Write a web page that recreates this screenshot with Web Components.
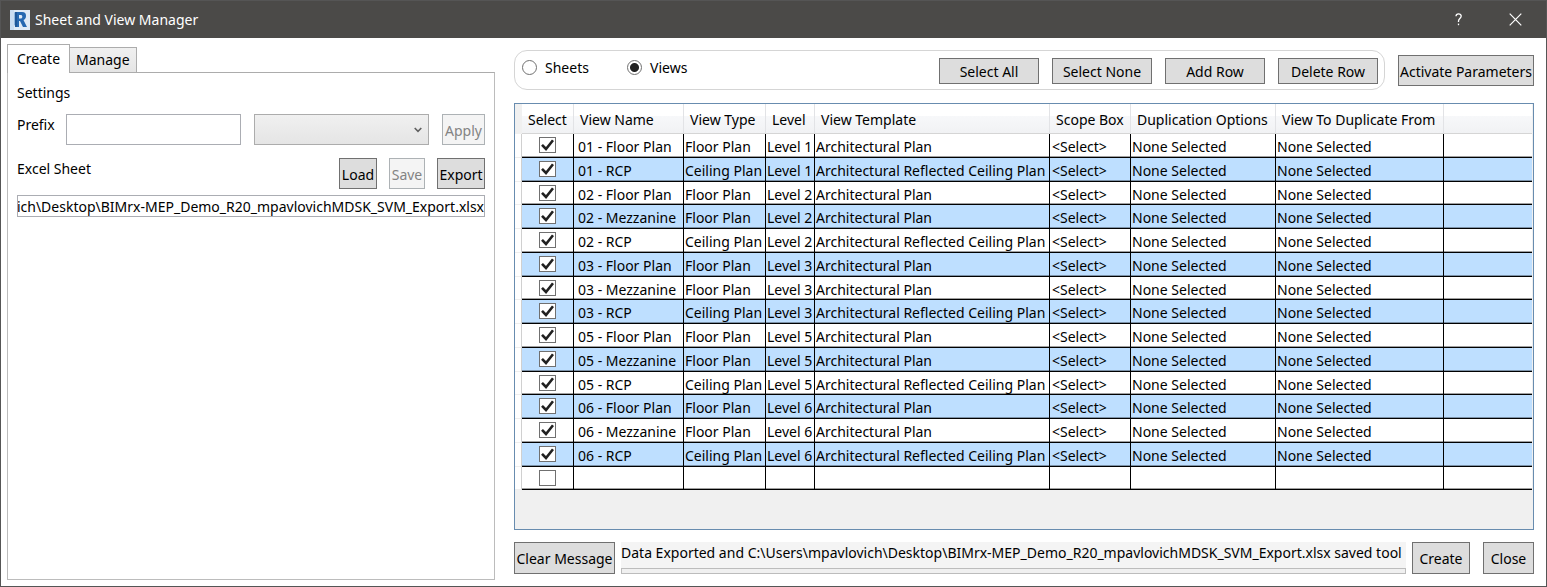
<!DOCTYPE html>
<html lang="en">
<head>
<meta charset="utf-8">
<title>Sheet and View Manager</title>
<style>
  body { margin: 0; font: 14px/20px "Noto Sans", "Open Sans", sans-serif; color: #000; background: #fff; }
</style>
</head>
<body>
<app-window heading="Sheet and View Manager">
  <tab-panel slot="side">
    <settings-form></settings-form>
  </tab-panel>
  <view-toolbar></view-toolbar>
  <view-table></view-table>
  <status-bar message="Data Exported and C:\Users\mpavlovich\Desktop\BIMrx-MEP_Demo_R20_mpavlovichMDSK_SVM_Export.xlsx saved tool"></status-bar>
</app-window>

<script>
const define = (name, html, setup) => customElements.define(name, class extends HTMLElement {
  connectedCallback() {
    if (this.shadowRoot) return;
    const root = this.attachShadow({ mode: "open" });
    root.innerHTML = "<style>*{box-sizing:border-box}:host{box-sizing:border-box}</style>" + html;
    if (setup) setup(this, root);
  }
});

/* Push button; the host carries the size, the button fills it. */
define("push-button", `
  <style>
    :host { display: block; height: 31px; }
    button { display: block; width: 100%; height: 100%; padding: 2px 0 0; margin: 0; font: inherit;
      color: #000; background: #ddd; border: 1px solid #707070; border-radius: 0; white-space: nowrap; }
    button:disabled { color: #838383; background: #f4f4f4; border-color: #adb2b5; }
  </style>
  <button type="button"><slot></slot></button>`,
  (el, root) => { root.querySelector("button").disabled = el.hasAttribute("disabled"); });

define("title-bar", `
  <style>
    :host { display: flex; align-items: center; height: 37px; padding: 0 0 0 9px; color: #fff; background: #4b4a48; }
    svg { display: block; }
    h1 { flex: 1; margin: 0 0 0 5px; font: inherit; }
    button { display: grid; place-items: center; width: 57px; height: 37px; padding: 0; border: 0;
      background: none; color: inherit; font: inherit; }
  </style>
  <svg width="20" height="20" viewBox="0 0 20 20" aria-hidden="true">
    <rect width="20" height="20" fill="#dfeaf6"/>
    <path d="M0 0h4v20H0z" fill="#c9dcf1"/>
    <path d="M4 2l3 2v13l-3-2z" fill="#8fb6de"/>
    <path fill-rule="evenodd" d="M5 2h7c3 0 4 1.500 4 4 0 2-1 3.500-2.500 4L17 17h-4l-3-6H9v6H5zM9 5v3.500h1.500c1.300 0 1.800-.6 1.800-1.800S11.800 5 10.500 5z" fill="#2668b1"/>
    <path d="M5 2h2v15H5z" fill="#1f5697"/>
  </svg>
  <h1><slot></slot></h1>
  <button type="button" aria-label="Help">
    <svg width="8" height="13" viewBox="0 0 8 13" fill="none" stroke="#fff" stroke-width="1.300">
      <path d="M1 3.200C1 1.500 2.200.8 3.600.8 5.200.8 6.200 1.700 6.200 3c0 2.400-2.700 2.600-2.700 5v1"/>
      <path d="M3.500 10.600v1.600"/>
    </svg>
  </button>
  <button type="button" aria-label="Close">
    <svg width="13" height="13" viewBox="0 0 13 13" fill="none" stroke="#fff" stroke-width="1.200">
      <path d="M.7.7l11.600 11.600M12.300.7L.7 12.300"/>
    </svg>
  </button>`);

define("app-window", `
  <style>
    :host { display: flex; flex-direction: column; min-height: 100vh; border: 1px solid #555; background: #fff; }
    title-bar { padding-right: 2px; }
    main { flex: 1; display: grid; grid-template-columns: minmax(0, 488fr) minmax(0, 1020fr); gap: 19px;
      padding: 6px 12px 6px 6px; }
    .content { display: flex; flex-direction: column; gap: 12px; padding: 6px 0; }
    ::slotted(view-table) { flex: 1; }
  </style>
  <title-bar></title-bar>
  <main>
    <slot name="side"></slot>
    <div class="content"><slot></slot></div>
  </main>`,
  (el, root) => { root.querySelector("title-bar").textContent = el.getAttribute("heading"); });

define("tab-panel", `
  <style>
    :host { display: flex; flex-direction: column; }
    .tabs { display: flex; align-items: flex-end; height: 28px; }
    button { height: 25px; padding: 0 6px; font: inherit; color: #000; border: 1px solid #acacac; border-left: 0;
      border-bottom: 0; background: linear-gradient(#f0f0f0, #e5e5e5); }
    button[aria-selected=true] { height: 29px; margin-bottom: -1px; padding: 0 9px; border-left: 1px solid #acacac;
      background: #fff; z-index: 1; }
    .body { flex: 1; padding: 10px 9px; border: 1px solid #bcbcbc; border-top-color: #acacac; }
  </style>
  <div class="tabs" role="tablist">
    <button type="button" role="tab" aria-selected="true">Create</button>
    <button type="button" role="tab" aria-selected="false">Manage</button>
  </div>
  <div class="body" role="tabpanel"><slot></slot></div>`);

define("settings-form", `
  <style>
    :host { display: block; }
    h2 { margin: 0; font: inherit; }
    .row { display: flex; align-items: flex-start; }
    .prefix { margin-top: 11px; gap: 13px; }
    .excel { margin-top: 13px; gap: 12px; }
    label { line-height: 22px; }
    .excel label { flex: 1; }
    input, select { display: block; flex: 1; min-width: 0; height: 31px; margin: 0; padding: 0; border: 1px solid #abadb3;
      border-radius: 0; background: #fff; font: inherit; color: #000; }
    .prefix label { width: 36px; white-space: nowrap; }
    select { appearance: none; border-color: #acacac;
      background: url('data:image/svg+xml,<svg xmlns="http://www.w3.org/2000/svg" width="8" height="6"><path d="M.7 1l3.300 3.300L7.300 1" fill="none" stroke="%23606060" stroke-width="1.600"/></svg>') no-repeat right 6px top 12px,
      linear-gradient(#f0f0f0, #e5e5e5); }
    .path { width: 100%; height: 22px; margin-top: 6px; }
    .w43 { width: 43px; } .w38 { width: 38px; } .w36 { width: 36px; } .w48 { width: 48px; }
  </style>
  <h2>Settings</h2>
  <div class="row prefix">
    <label for="prefix">Prefix</label>
    <input id="prefix" type="text">
    <select aria-label="Prefix field"></select>
    <push-button class="w43" disabled>Apply</push-button>
  </div>
  <div class="row excel">
    <label for="path">Excel Sheet</label>
    <push-button class="w38">Load</push-button>
    <push-button class="w36" disabled>Save</push-button>
    <push-button class="w48">Export</push-button>
  </div>
  <input id="path" class="path" type="text"
    value="C:\\Users\\mpavlovich\\Desktop\\BIMrx-MEP_Demo_R20_mpavlovichMDSK_SVM_Export.xlsx">`,
  (el, root) => {
    const path = root.getElementById("path");
    const showEnd = () => { path.scrollLeft = path.scrollWidth; };
    requestAnimationFrame(showEnd);
    addEventListener("load", showEnd);
    addEventListener("resize", showEnd);
  });

define("view-toolbar", `
  <style>
    :host { display: flex; align-items: flex-start; gap: 13px; height: 41px; }
    .group { flex: 1; display: flex; align-items: flex-start; gap: 13px; height: 40px; padding: 7px 6px 0 7px;
      border: 1px solid #d5d5d5; border-radius: 13px; }
    label { display: flex; align-items: center; gap: 8px; width: 92px; white-space: nowrap; }
    .views { flex: 1; }
    input { appearance: none; width: 15px; height: 15px; margin: 0 0 2px; border: 1px solid #707070;
      border-radius: 50%; background: #fff; }
    input:checked { background: radial-gradient(circle, #212121 4px, #fff 5px); }
    push-button { width: 100px; height: 26px; }
    .activate { width: 136px; height: 31px; margin-top: 5px; }
  </style>
  <div class="group">
    <label><input type="radio" name="kind">Sheets</label>
    <label class="views"><input type="radio" name="kind" checked>Views</label>
    <push-button>Select All</push-button>
    <push-button>Select None</push-button>
    <push-button>Add Row</push-button>
    <push-button>Delete Row</push-button>
  </div>
  <push-button class="activate">Activate Parameters</push-button>`);

define("view-table", `
  <style>
    :host { display: block; min-height: 427px; padding-right: 1px; border: 1px solid #688caf; background: #f0f0f0; overflow: hidden; }
    table { width: 100%; table-layout: fixed; border-collapse: separate; border-spacing: 0; }
    th { height: 30px; padding: 3px 0 0 6px; font-weight: normal; text-align: left; white-space: nowrap;
      border-right: 1px solid #e2e3e6; border-bottom: 1px solid #d5d5d5;
      background: linear-gradient(#fff 0, #fff 40%, #f7f8fa 41%, #f1f2f4 100%); }
    th:last-child { border-right: 0; }
    td { height: 24px; padding: 2px 0 0 1px; line-height: 20px; white-space: nowrap; background: #fff;
      border-right: 1px solid #000; border-bottom: 1px solid #000; box-shadow: inset 0 -1px #a0a0a0; overflow: hidden; }
    tr:nth-child(4n+3) td { height: 23px; line-height: 19px; }
    tr:nth-child(even) td { background: #bedfff; box-shadow: inset 0 -1px #7c92a8; }
    td:last-child { border-right: 0; }
    tbody th { height: auto; padding: 0; background: #fff; border-right: 1px solid #d0d0d0; border-bottom: 1px solid #eee; }
    thead th:first-child { background: #f0f0f0; border-right: 0; border-bottom: 0; }
    td:nth-child(2) { padding: 0; }
    td:nth-child(3) { padding-left: 4px; }
    td:nth-child(7) { padding-left: 2px; }
    input { appearance: none; display: block; width: 17px; height: 16px; margin: 0 auto 1px; border: 1px solid #707070;
      background: #fff; }
    input:checked { background: #fff url('data:image/svg+xml,<svg xmlns="http://www.w3.org/2000/svg" width="15" height="14"><path d="M2 6.800l4 4.200L13 2.300" fill="none" stroke="%23212121" stroke-width="2.600"/></svg>'); }
  </style>
  <table>
    <colgroup><col style="width:7px"><col style="width:52px"><col style="width:110px"><col style="width:82px"><col style="width:49px"><col style="width:235px"><col style="width:81px"><col style="width:145px"><col style="width:168px"><col></colgroup>
    <thead><tr></tr></thead>
    <tbody></tbody>
  </table>`,
  (el, root) => {
    const heads = ["", "Select", "View Name", "View Type", "Level", "View Template", "Scope Box",
      "Duplication Options", "View To Duplicate From", ""];
    root.querySelector("thead tr").innerHTML = heads.map(h => `<th>${h}</th>`).join("");
    const names = ["01 - Floor Plan", "01 - RCP", "02 - Floor Plan", "02 - Mezzanine", "02 - RCP",
      "03 - Floor Plan", "03 - Mezzanine", "03 - RCP", "05 - Floor Plan", "05 - Mezzanine", "05 - RCP",
      "06 - Floor Plan", "06 - Mezzanine", "06 - RCP"];
    const rows = names.map(name => {
      const ceiling = name.endsWith("RCP");
      return [name, ceiling ? "Ceiling Plan" : "Floor Plan", "Level " + name[1],
        ceiling ? "Architectural Reflected Ceiling Plan" : "Architectural Plan",
        "&lt;Select&gt;", "None Selected", "None Selected", ""];
    });
    rows.push(Array(8).fill(""));
    root.querySelector("tbody").innerHTML = rows.map(r =>
      `<tr><th></th><td><input type="checkbox" aria-label="Select ${r[0] || "new row"}"${r[0] ? " checked" : ""}></td>`
      + r.map(c => `<td>${c}</td>`).join("") + "</tr>").join("");
  });

define("status-bar", `
  <style>
    :host { display: flex; gap: 6px; }
    .message { flex: 1; min-width: 0; display: flex; flex-direction: column; justify-content: space-between;
      background: #f4f4f4; }
    output { display: block; overflow: hidden; white-space: nowrap; line-height: 22px; }
    progress { appearance: none; display: block; width: 100%; height: 6px; border: 1px solid #bcbcbc; background: #f0f0f0; }
    progress::-webkit-progress-bar { background: #f0f0f0; }
    push-button { height: 32px; }
    .clear { width: 101px; } .create { width: 58px; } .close { width: 51px; margin-left: 7px; }
  </style>
  <push-button class="clear">Clear Message</push-button>
  <div class="message">
    <output></output>
    <progress value="0" max="100" aria-label="Progress"></progress>
  </div>
  <push-button class="create">Create</push-button>
  <push-button class="close">Close</push-button>`,
  (el, root) => { root.querySelector("output").textContent = el.getAttribute("message"); });
</script>
</body>
</html>
